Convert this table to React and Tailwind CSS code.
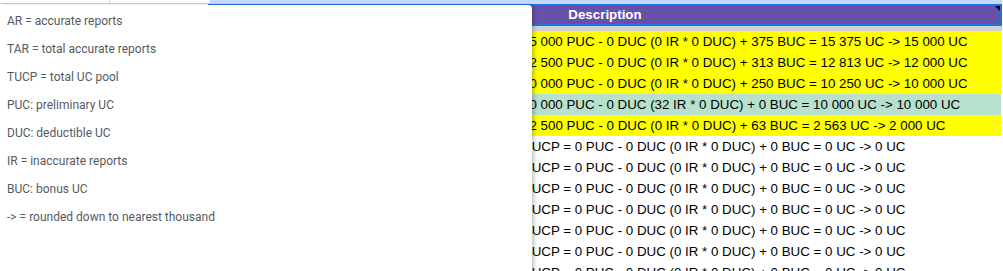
const rows = [
  { bg: "bg-[#ffff00]", pad: "pl-[312px]", text: "15 000 PUC - 0 DUC (0 IR * 0 DUC) + 375 BUC = 15 375 UC -> 15 000 UC" },
  { bg: "bg-[#ffff00]", pad: "pl-[312px]", text: "12 500 PUC - 0 DUC (0 IR * 0 DUC) + 313 BUC = 12 813 UC -> 12 000 UC" },
  { bg: "bg-[#ffff00]", pad: "pl-[312px]", text: "10 000 PUC - 0 DUC (0 IR * 0 DUC) + 250 BUC = 10 250 UC -> 10 000 UC" },
  { bg: "bg-[#b7e1cd]", pad: "pl-[312px]", text: "10 000 PUC - 0 DUC (32 IR * 0 DUC) + 0 BUC = 10 000 UC -> 10 000 UC" },
  { bg: "bg-[#ffff00]", pad: "pl-[319.5px]", text: "2 500 PUC - 0 DUC (0 IR * 0 DUC) + 63 BUC = 2 563 UC -> 2 000 UC" },
];

const empty = "TUCP = 0 PUC - 0 DUC (0 IR * 0 DUC) + 0 BUC = 0 UC -> 0 UC";
for (let i = 0; i < 7; i++) {
  rows.push({ bg: "bg-white", pad: "pl-[313.5px]", text: empty });
}

const legend = [
  "AR = accurate reports",
  "TAR = total accurate reports",
  "TUCP = total UC pool",
  "PUC: preliminary UC",
  "DUC: deductible UC",
  "IR = inaccurate reports",
  "BUC: bonus UC",
  "-> = rounded down to nearest thousand",
];

export default function App() {
  return (
    <div className="relative w-[1003px] h-[271px] overflow-hidden bg-white">
      {/* Sheet behind */}
      <div className="flex flex-col font-['Liberation_Sans',Arial,sans-serif] text-[13.333px] text-black">
        {/* column header strip */}
        <div className="flex h-[4px]">
          <div className="w-[110px] bg-white border-r border-b border-[#d3d3d3]"></div>
          <div className="w-[100px] bg-white border-b border-[#d3d3d3]"></div>
          <div className="w-[792px] bg-[#c6d8f6]"></div>
          <div className="flex-1 bg-[#f1f3f4]"></div>
        </div>

        {/* frozen header */}
        <div className="flex h-[22px]">
          <div className="w-[208px]"></div>
          <div className="relative w-[794px] border-2 border-[#1a73e8] bg-[#6750a8] flex items-center justify-center">
            <span className="font-bold text-white">Description</span>
            <div className="absolute top-0 right-0 w-0 h-0 border-l-[5px] border-l-transparent border-t-[5px] border-t-black"></div>
          </div>
        </div>

        <div className="h-[5px] w-[1002px] bg-[#d0d0d0]"></div>

        {rows.map((r, i) => (
          <div key={i} className="flex h-[21px]">
            <div className="w-[210px] bg-white"></div>
            <div className={`w-[791px] ${r.bg} ${r.pad} flex items-center whitespace-nowrap overflow-hidden`}>
              {r.text}
            </div>
          </div>
        ))}
      </div>

      {/* Legend popup */}
      <div className="absolute left-0 top-[5px] w-[532px] h-[300px] bg-white rounded-tr-[4px] shadow-[2px_1px_4px_rgba(0,0,0,0.25)] pt-[2px]">
        <ul className="flex flex-col font-['Roboto',sans-serif] text-[12px] text-[#555a5f]">
          {legend.map((t) => (
            <li key={t} className="h-[28px] flex items-center pl-[7px]">
              {t}
            </li>
          ))}
        </ul>
      </div>
    </div>
  );
}
